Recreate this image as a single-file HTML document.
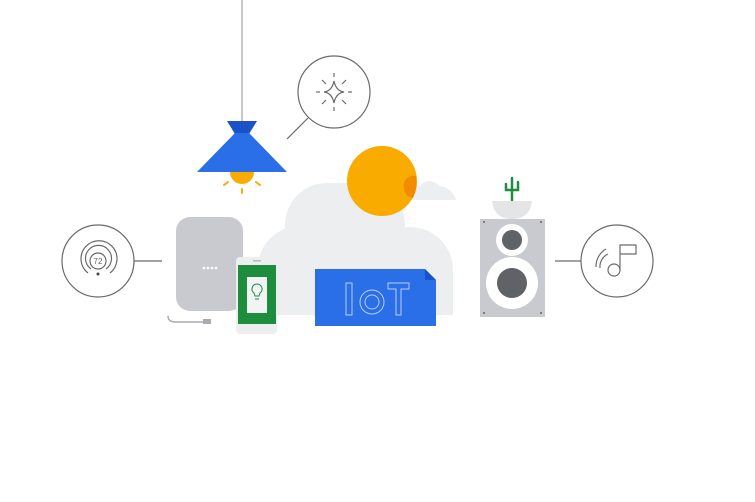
<!DOCTYPE html>
<html><head><style>html,body{margin:0;padding:0;background:#fff;width:755px;height:502px;overflow:hidden}</style></head>
<body>
<svg width="755" height="502" viewBox="0 0 755 502" xmlns="http://www.w3.org/2000/svg">
<!-- cloud -->
<g fill="#eceef0">
<rect x="285" y="183" width="120" height="135" rx="42"/>
<circle cx="300" cy="268" r="42"/>
<circle cx="410" cy="270" r="43"/>
<rect x="258" y="265" width="195" height="50"/>
<path d="M395 200 V190 Q405 184 420 186 Q428 176 440 186 Q452 188 456 200Z"/>
</g>
<!-- sun -->
<circle cx="382" cy="181" r="35" fill="#f9ab00"/>
<path d="M416 176 a35 35 0 0 1 -3 22 a10 10 0 0 1 -9 -10 a10 10 0 0 1 12 -12z" fill="#f28b00"/>
<!-- lamp -->
<line x1="242" y1="0" x2="242" y2="121" stroke="#c8c9cc" stroke-width="2"/>
<circle cx="242" cy="172" r="12" fill="#f9ab00"/>
<path d="M227 121 H257 L249 134 H235Z" fill="#1a52c8"/>
<path d="M235 133 H249 L287 172 H197Z" fill="#2a6ee8"/>
<g stroke="#f9ab00" stroke-width="2" stroke-linecap="round">
<line x1="242" y1="189" x2="242" y2="193"/><line x1="224" y1="185" x2="228" y2="182"/><line x1="260" y1="185" x2="256" y2="182"/></g>
<!-- star circle -->
<g fill="none" stroke="#6b6b6b" stroke-width="1.2">
<circle cx="334" cy="92" r="36"/>
<line x1="308" y1="118" x2="287" y2="139"/>
<path d="M334 81 Q336 91 344 92 Q336 93 334 103 Q332 93 324 92 Q332 91 334 81Z"/>
<line x1="334" y1="73" x2="334" y2="77"/><line x1="334" y1="107" x2="334" y2="111"/>
<line x1="316" y1="92" x2="320" y2="92"/><line x1="348" y1="92" x2="352" y2="92"/>
<line x1="322" y1="80" x2="326" y2="84"/><line x1="346" y1="80" x2="342" y2="84"/>
<line x1="322" y1="104" x2="326" y2="100"/><line x1="346" y1="104" x2="342" y2="100"/>
</g>
<!-- thermostat -->
<g fill="none" stroke="#6b6b6b" stroke-width="1.2">
<circle cx="98" cy="261" r="36"/>
<line x1="134" y1="261" x2="162" y2="261"/>
<path d="M88 273 A18 18 0 1 1 110 273"/>
<path d="M91 269 A13 13 0 1 1 106 269"/>
<circle cx="98" cy="261" r="8"/>
</g>
<text x="98" y="264" font-family="Liberation Sans,sans-serif" font-size="8" fill="#6b6b6b" text-anchor="middle">72</text>
<circle cx="98" cy="274" r="1.5" fill="#444"/>
<!-- google home -->
<path d="M168 316 Q168 322 176 322 H205" fill="none" stroke="#a9abaf" stroke-width="1.5"/>
<rect x="203" y="319" width="8" height="5" fill="#a9abaf"/>
<rect x="176" y="217" width="67" height="94" rx="14" fill="#c9cacf"/>
<g fill="#fff"><circle cx="204" cy="268" r="1.3"/><circle cx="208" cy="268" r="1.3"/><circle cx="212" cy="268" r="1.3"/><circle cx="216" cy="268" r="1.3"/></g>
<!-- phone -->
<rect x="236" y="257" width="41" height="77" rx="4" fill="#eceef0"/>
<rect x="238" y="265" width="38" height="59" fill="#1e8e3e"/>
<rect x="247" y="277" width="20" height="36" fill="#f1f3f4"/>
<path d="M257 284 a5 5 0 0 1 3 9 l-1 3 h-4 l-1 -3 a5 5 0 0 1 3 -9z M255 299 h4" fill="none" stroke="#1e8e3e" stroke-width="1"/>
<rect x="253" y="260" width="8" height="1.5" fill="#bbb"/>
<!-- IoT card -->
<path d="M315 269 H425 L436 280 V326 H315Z" fill="#2a6ee8"/>
<path d="M425 269 L436 280 H425Z" fill="#1a52c8"/>
<g fill="none" stroke="#b8cff7" stroke-width="1">
<rect x="346" y="283" width="6" height="32"/>
<circle cx="372" cy="302" r="12"/><circle cx="372" cy="302" r="7"/>
<path d="M388 283 H409 V289 H401 V315 H396 V289 H388Z"/>
</g>
<!-- speaker -->
<path d="M492 201 H532 Q530 219 512 219 Q494 219 492 201Z" fill="#e4e5e7"/>
<path d="M512 200 V178 M506 184 V190 H518 V182" fill="none" stroke="#1e8e3e" stroke-width="2.5" stroke-linecap="round"/>
<rect x="480" y="219" width="65" height="98" fill="#c9cacf"/>
<circle cx="512" cy="240" r="16" fill="#fff"/><circle cx="512" cy="240" r="10" fill="#5f6368"/>
<circle cx="512" cy="283" r="26" fill="#fff"/><circle cx="512" cy="283" r="15" fill="#5f6368"/>
<g fill="#666"><circle cx="484" cy="222" r="1"/><circle cx="541" cy="222" r="1"/><circle cx="484" cy="313" r="1"/><circle cx="541" cy="313" r="1"/></g>
<!-- music circle -->
<g fill="none" stroke="#6b6b6b" stroke-width="1.2">
<circle cx="617" cy="261" r="36"/>
<line x1="555" y1="261" x2="581" y2="261"/>
<circle cx="614" cy="270" r="6"/>
<path d="M620 270 V245 H636 V254 H620"/>
<path d="M608 254 A14 14 0 0 0 600 268"/>
<path d="M606 249 A20 20 0 0 0 596 267"/>
</g>
</svg>
</body></html>
